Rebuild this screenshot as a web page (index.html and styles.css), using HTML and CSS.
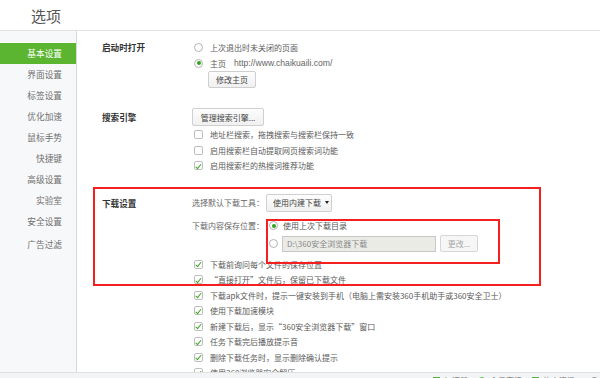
FILE: index.html
```html
<!DOCTYPE html>
<html lang="zh-CN">
<head>
    <meta charset="UTF-8">
    <title>选项</title>
    <link rel="stylesheet" href="styles.css">
</head>
<body>
<div class="app">
    <header class="topbar">
        <h1>选项</h1>
    </header>

    <div class="middle">
        <nav class="sidebar">
            <a class="nav-item active">基本设置</a>
            <a class="nav-item">界面设置</a>
            <a class="nav-item">标签设置</a>
            <a class="nav-item">优化加速</a>
            <a class="nav-item">鼠标手势</a>
            <a class="nav-item">快捷键</a>
            <a class="nav-item">高级设置</a>
            <a class="nav-item">实验室</a>
            <a class="nav-item">安全设置</a>
            <a class="nav-item last">广告过滤</a>
        </nav>

        <main class="content">
            <section class="section">
                <div class="section-label">启动时打开</div>
                <div class="section-body">
                    <div class="option"><span class="radio"></span>上次退出时未关闭的页面</div>
                    <div class="option"><span class="radio checked"></span>主页<span class="url">http://www.chaikuaili.com/</span></div>
                    <button class="btn btn-home">修改主页</button>
                </div>
            </section>

            <section class="section">
                <div class="section-label tall">搜索引擎</div>
                <div class="section-body">
                    <button class="btn btn-engine">管理搜索引擎...</button>
                    <div class="checklist">
                        <div class="option"><span class="checkbox"></span>地址栏搜索，拖拽搜索与搜索栏保持一致</div>
                        <div class="option"><span class="checkbox"></span>启用搜索栏自动提取网页搜索词功能</div>
                        <div class="option"><span class="checkbox checked"></span>启用搜索栏的热搜词推荐功能</div>
                    </div>
                </div>
            </section>

            <section class="section">
                <div class="section-label tall">下载设置</div>
                <div class="section-body">
                    <div class="sub-row">
                        <div class="sub-label tall">选择默认下载工具：</div>
                        <div class="select">使用内建下载<span class="caret"></span></div>
                    </div>
                    <div class="sub-row save-row">
                        <div class="sub-label">下载内容保存位置：</div>
                        <div class="save-opts">
                            <div class="save-opt"><span class="radio checked"></span>使用上次下载目录</div>
                            <div class="save-opt path-row">
                                <span class="radio"></span>
                                <div class="path-input">D:\360安全浏览器下载</div>
                                <button class="btn btn-change" disabled>更改...</button>
                            </div>
                        </div>
                    </div>
                    <div class="checklist dl-list">
                        <div class="option"><span class="checkbox checked"></span>下载前询问每个文件的保存位置</div>
                        <div class="option"><span class="checkbox checked"></span>“直接打开”文件后，保留已下载文件</div>
                        <div class="option"><span class="checkbox checked"></span>下载apk文件时，提示一键安装到手机（电脑上需安装360手机助手或360安全卫士）</div>
                        <div class="option"><span class="checkbox checked"></span>使用下载加速模块</div>
                        <div class="option"><span class="checkbox checked"></span>新建下载后，显示“360安全浏览器下载”窗口</div>
                        <div class="option"><span class="checkbox checked"></span>任务下载完后播放提示音</div>
                        <div class="option"><span class="checkbox checked"></span>删除下载任务时，显示删除确认提示</div>
                        <div class="option"><span class="checkbox checked"></span>使用360浏览器安全解压</div>
                    </div>
                </div>
            </section>

            <!-- annotation frames drawn over the screenshot -->
            <div class="mark mark-outer"></div>
            <div class="mark mark-inner"></div>
        </main>
    </div>

    <footer class="statusbar">
        <span class="sb-left">100%</span>
        <div class="sb-right">
            <span class="sb-item"><span class="sb-icon sq"></span>加速器</span>
            <span class="sb-item"><span class="sb-icon ring"></span>今日直播</span>
            <span class="sb-item"><span class="sb-icon sq"></span>热点资讯</span>
            <span class="sb-item"><span class="sb-icon gear"></span></span>
        </div>
    </footer>
</div>
</body>
</html>
```

FILE: styles.css
```css
body {
    margin: 0;
    font-family: "Noto Sans CJK SC", "Liberation Sans", sans-serif;
    font-size: 8px;
    color: #5a5a5a;
    background: #fff;
    overflow: hidden;
}

.app {
    height: 392px;
    display: flex;
    flex-direction: column;
}

.topbar {
    height: 30px;
    flex-shrink: 0;
    border-bottom: 1px solid #e3e3e3;
    padding-left: 31px;
    display: flex;
    align-items: center;
}

.topbar h1 {
    margin: 0;
    font-size: 15px;
    font-weight: normal;
    color: #555;
}

.middle {
    flex: 1;
    display: flex;
    min-height: 0;
}

.sidebar {
    width: 76px;
    flex-shrink: 0;
    background: #f7f8fa;
    border-right: 1px solid #d9d9d9;
    padding-top: 12px;
}

.nav-item {
    display: block;
    height: 21px;
    line-height: 21px;
    text-align: right;
    padding-right: 14px;
    font-size: 8.7px;
    color: #707070;
}

.nav-item.active {
    background: #5cb531;
    color: #fff;
}

.nav-item.last {
    margin-top: 2px;
}

.content {
    flex: 1;
    position: relative;
    padding: 8px 0 0 25px;
    overflow: hidden;
}

.section {
    display: flex;
}

.section + .section {
    margin-top: 20px;
}

.section-label {
    width: 90px;
    flex-shrink: 0;
    font-size: 8.6px;
    font-weight: bold;
    color: #333;
    line-height: 16px;
}

.section-label.tall {
    line-height: 18px;
}

.section-body {
    flex: 1;
}

.option {
    display: flex;
    align-items: center;
    height: 16px;
    white-space: nowrap;
}

.checklist {
    margin-top: 1px;
}

.checklist .option {
    height: 15.5px;
}

.dl-list {
    margin-top: 4px;
}

.radio,
.checkbox {
    position: relative;
    width: 9px;
    height: 9px;
    flex-shrink: 0;
    box-sizing: border-box;
    border: 1px solid #b3b3b3;
    background: #fff;
    margin: 0 7px 0 2px;
}

.radio {
    border-radius: 50%;
}

.radio.checked::after {
    content: "";
    position: absolute;
    left: 1.5px;
    top: 1.5px;
    width: 4px;
    height: 4px;
    border-radius: 50%;
    background: #2fa51d;
}

.checkbox {
    border-radius: 2px;
    border-color: #bdbdbd;
}

.checkbox.checked::after {
    content: "";
    position: absolute;
    left: 2.4px;
    top: 0.4px;
    width: 2.2px;
    height: 4.6px;
    border: solid #3aa51c;
    border-width: 0 1.5px 1.5px 0;
    transform: rotate(40deg);
}

.url {
    margin-left: 8px;
    font-family: "Liberation Sans", sans-serif;
    font-size: 8.6px;
    color: #666;
}

.btn {
    font-family: inherit;
    font-size: 8px;
    color: #444;
    background: linear-gradient(#fdfdfd, #f0f0f0);
    border: 1px solid #cfcfcf;
    border-radius: 2px;
    padding: 0;
    display: block;
}

.btn-home {
    width: 48px;
    height: 17px;
    margin-left: 16px;
}

.btn-engine {
    width: 72px;
    height: 18px;
}

.sub-row {
    display: flex;
}

.sub-label {
    width: 74px;
    flex-shrink: 0;
    line-height: 16px;
    color: #666;
}

.sub-label.tall {
    line-height: 18px;
}

.select {
    width: 66px;
    height: 18px;
    box-sizing: border-box;
    border: 1px solid #cfcfcf;
    border-radius: 2px;
    background: linear-gradient(#fdfdfd, #f1f1f1);
    display: flex;
    align-items: center;
    padding-left: 6px;
    color: #444;
}

.caret {
    margin-left: 4px;
    border-left: 2.5px solid transparent;
    border-right: 2.5px solid transparent;
    border-top: 3px solid #222;
}

.save-row {
    margin-top: 6px;
}

.save-opts {
    padding-left: 1px;
}

.save-opt {
    display: flex;
    align-items: center;
    height: 16px;
    color: #555;
}

.save-opt .radio {
    margin: 0 5px 0 2px;
}

.path-row {
    height: 18px;
    margin-top: 1px;
}

.path-row .radio {
    margin-right: 4px;
}

.path-input {
    width: 154px;
    height: 16px;
    box-sizing: border-box;
    border: 1px solid #c8c8c8;
    background: #ebebe6;
    color: #888;
    line-height: 14px;
    padding-left: 4px;
}

.btn-change {
    width: 38px;
    height: 17px;
    margin-left: 4px;
    color: #aaa;
    background: #f6f6f6;
    border-color: #d6d6d6;
}

.mark {
    position: absolute;
    box-sizing: border-box;
    border: 2px solid #f42020;
    pointer-events: none;
}

.mark-outer {
    left: 16px;
    top: 156px;
    width: 448px;
    height: 99px;
}

.mark-inner {
    left: 189px;
    top: 188px;
    width: 234px;
    height: 45px;
}

.statusbar {
    height: 20px;
    flex-shrink: 0;
    background: #f3f4f6;
    border-top: 1px solid #e0e0e0;
    display: flex;
    align-items: flex-start;
    padding-top: 3px;
    box-sizing: border-box;
}

.sb-left {
    margin-left: 2px;
    font-size: 6px;
    color: #888;
}

.sb-right {
    margin-left: auto;
    display: flex;
    gap: 10px;
    padding-right: 2px;
}

.sb-item {
    display: flex;
    align-items: center;
    gap: 4px;
    color: #666;
    font-size: 8px;
    line-height: 10px;
}

.sb-icon {
    width: 7px;
    height: 8px;
    box-sizing: border-box;
    border: 1px solid #4fb43a;
}

.sb-icon.ring {
    border-radius: 50%;
    width: 8px;
}

.sb-icon.gear {
    border-color: #999;
    border-radius: 50%;
    margin-left: 6px;
}
```
